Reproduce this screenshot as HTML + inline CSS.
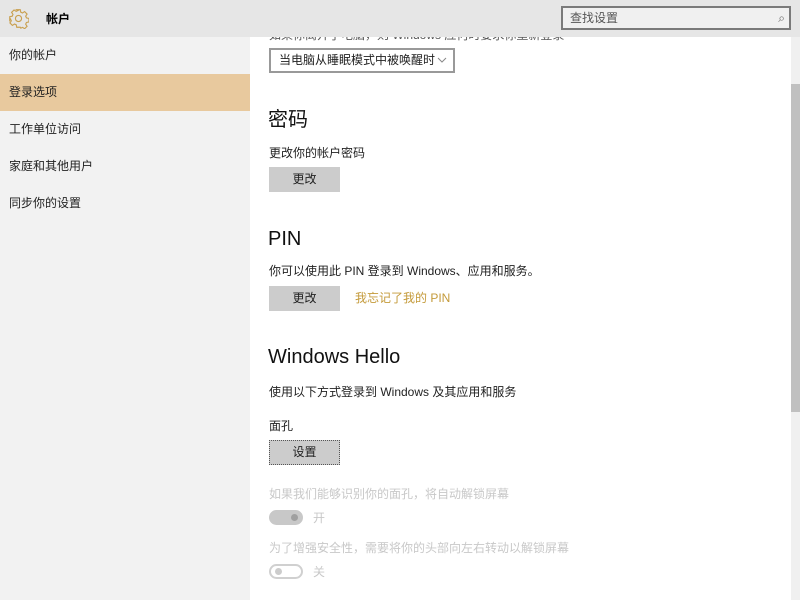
<!DOCTYPE html>
<html><head><meta charset="utf-8"><style>
*{margin:0;padding:0;box-sizing:border-box}
body{width:800px;height:600px;overflow:hidden;background:#fff;font-family:"Liberation Sans","Noto Sans CJK SC",sans-serif;color:#000;position:relative}
.hdr{position:absolute;left:0;top:0;width:800px;height:37px;background:#e6e6e6;z-index:5}
.side{position:absolute;left:0;top:37px;width:250px;height:563px;background:#f2f2f2}
.side div{height:37px;line-height:37px;padding-left:9px;font-size:12px;color:#222}
.side .sel{background:#e8c99e}
.a{position:absolute;font-size:12px;line-height:16px;color:#222;white-space:nowrap}
.h{position:absolute;font-size:20px;line-height:24px;color:#111;white-space:nowrap}
.btn{position:absolute;width:71px;height:25px;background:#cccccc;font-size:12px;text-align:center;line-height:25px;color:#222}
.g{color:#c8c8c8}
</style></head><body>
<div class="a" style="left:269px;top:27px;color:#555">如果你离开了电脑，则 Windows 应何时要求你重新登录</div>
<div class="hdr">
<svg style="position:absolute;left:8px;top:8px" width="21" height="21" viewBox="0 0 24 24" fill="none" stroke="#c9a050" stroke-width="1.3"><path d="M10 2h4l.6 2.8 2 .9 2.4-1.6 2.8 2.8-1.6 2.4.9 2 2.8.6v4l-2.8.6-.9 2 1.6 2.4-2.8 2.8-2.4-1.6-2 .9L14 22h-4l-.6-2.8-2-.9-2.4 1.6-2.8-2.8 1.6-2.4-.9-2L2 14v-4l2.8-.6.9-2L4.1 5l2.8-2.8 2.4 1.6 2-.9z"/><circle cx="12" cy="12" r="3.5"/></svg>
<div style="position:absolute;left:46px;top:11px;font-size:12px;line-height:16px;font-weight:bold">帐户</div>
<div style="position:absolute;left:561px;top:6px;width:230px;height:24px;border:2px solid #7a7a7a;background:#f0f0f0;font-size:12px;color:#555;padding-left:7px;line-height:20px">查找设置<span style="position:absolute;right:4px;top:0;font-size:12px;color:#666">⌕</span></div>
</div>
<div class="side">
<div>你的帐户</div><div class="sel">登录选项</div><div>工作单位访问</div><div>家庭和其他用户</div><div>同步你的设置</div>
</div>
<div style="position:absolute;left:269px;top:48px;width:186px;height:25px;border:2px solid #999;font-size:12px;line-height:21px;padding-left:8px;color:#222">当电脑从睡眠模式中被唤醒时
<svg style="position:absolute;right:6px;top:7px" width="10" height="6" viewBox="0 0 10 6"><path d="M1 1l4 4 4-4" fill="none" stroke="#888" stroke-width="1"/></svg></div>
<div class="h" style="left:268px;top:108px">密码</div>
<div class="a" style="left:269px;top:145px">更改你的帐户密码</div>
<div class="btn" style="left:269px;top:167px">更改</div>
<div class="h" style="left:268px;top:227px">PIN</div>
<div class="a" style="left:269px;top:263px">你可以使用此 PIN 登录到 Windows、应用和服务。</div>
<div class="btn" style="left:269px;top:286px">更改</div>
<div class="a" style="left:355px;top:290px;color:#c49a3a">我忘记了我的 PIN</div>
<div class="h" style="left:268px;top:345px">Windows Hello</div>
<div class="a" style="left:269px;top:384px">使用以下方式登录到 Windows 及其应用和服务</div>
<div class="a" style="left:269px;top:418px">面孔</div>
<div class="btn" style="left:269px;top:440px;border:1px dotted #555;line-height:23px">设置</div>
<div class="a g" style="left:269px;top:486px">如果我们能够识别你的面孔，将自动解锁屏幕</div>
<div style="position:absolute;left:269px;top:510px;width:34px;height:15px;border-radius:8px;background:#c8c8c8"></div>
<div style="position:absolute;left:291px;top:514px;width:7px;height:7px;border-radius:4px;background:#a0a0a0"></div>
<div class="a g" style="left:313px;top:510px">开</div>
<div class="a g" style="left:269px;top:540px">为了增强安全性，需要将你的头部向左右转动以解锁屏幕</div>
<div style="position:absolute;left:269px;top:564px;width:34px;height:15px;border-radius:8px;border:2px solid #d0d0d0"></div>
<div style="position:absolute;left:275px;top:568px;width:7px;height:7px;border-radius:4px;background:#ccc"></div>
<div class="a g" style="left:313px;top:564px">关</div>
<div style="position:absolute;left:791px;top:37px;width:9px;height:563px;background:#f0f0f0"></div>
<div style="position:absolute;left:791px;top:84px;width:9px;height:328px;background:#c0c0c0"></div>
</body></html>
